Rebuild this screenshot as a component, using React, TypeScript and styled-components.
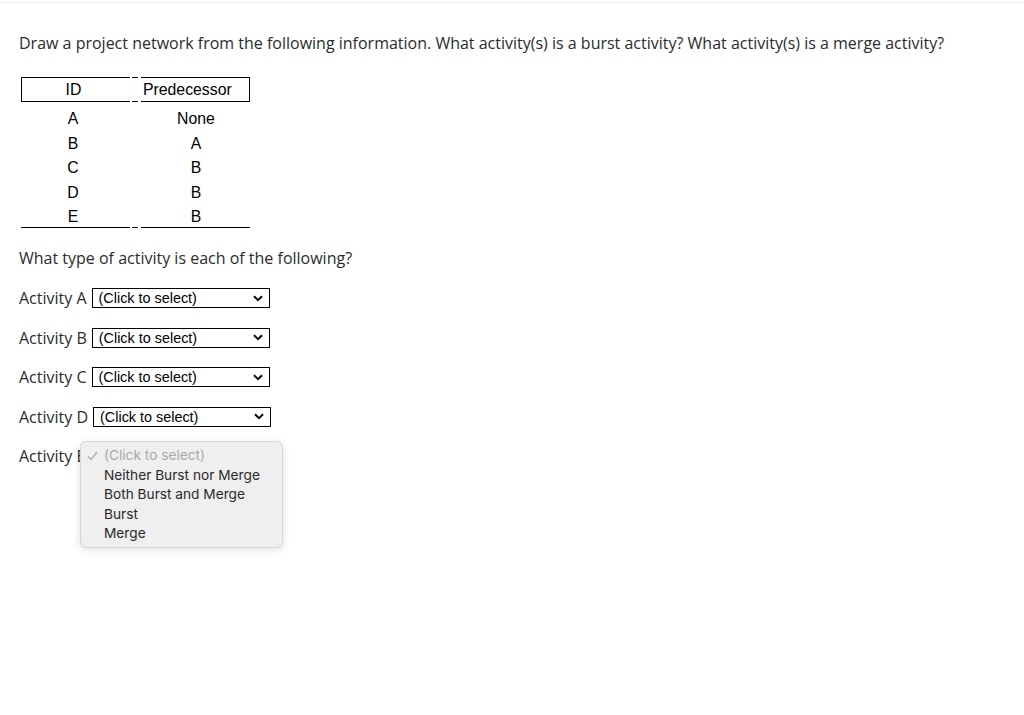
import { FC } from 'react';
import styled, { createGlobalStyle } from 'styled-components';

const Global = createGlobalStyle`
  html, body { margin: 0; padding: 0; background: #fff; }
  body { font-family: "Open Sans", "Liberation Sans", sans-serif; color: #2b2b2b; }
`;

const Page = styled.div`
  min-height: 712px;
  border-top: 1px solid #ececec;
  margin-top: 2px;
  padding: 26px 19px 0 19px;
`;

const Heading = styled.p`
  margin: 0 0 20px 0;
  font-size: 16px;
  line-height: 28px;
`;

const Table = styled.div`
  display: grid;
  grid-template-columns: 109px 11px 109px;
  margin-left: 2px;
  font-family: "Liberation Sans", Arial, sans-serif;
  font-size: 15.8px;
  color: #000;
`;

const HeadCell = styled.div<{ $side: 'left' | 'right' }>`
  height: 23px;
  line-height: 23px;
  border-top: 1px solid #000;
  border-bottom: 1px solid #000;
  ${(p) =>
    p.$side === 'left'
      ? 'border-left: 1px solid #000; text-align: center; padding-right: 5px;'
      : 'border-right: 1px solid #000; text-align: left; padding-left: 2px;'}
`;

const Gap = styled.div<{ $bottomOnly?: boolean }>`
  position: relative;
  &::before, &::after {
    content: '';
    position: absolute;
    left: 2px;
    width: 6px;
    height: 1px;
    background: #000;
  }
  &::before { top: 0; ${(p) => (p.$bottomOnly ? 'display: none;' : '')} }
  &::after { bottom: 0; }
`;

const Cell = styled.div<{ $first?: boolean; $last?: boolean; $left?: boolean }>`
  height: 24.5px;
  line-height: 24.5px;
  text-align: center;
  ${(p) => (p.$left ? 'padding-right: 5px;' : 'padding-left: 1px;')}
  ${(p) => (p.$first ? 'padding-top: 5px;' : '')}
  ${(p) => (p.$last ? 'border-bottom: 1px solid #000; height: 22px; line-height: 24px;' : '')}
`;

const Question = styled.p`
  margin: 17px 0 17px 0;
  font-size: 16px;
  line-height: 26px;
`;

const Rows = styled.div`
  position: relative;
  display: flex;
  flex-direction: column;
  gap: 19.5px;
`;

const Row = styled.div`
  display: flex;
  align-items: center;
  height: 20px;
  font-size: 16px;
`;

const Label = styled.span`
  margin-right: 5px;
`;

const FakeSelect = styled.div`
  box-sizing: border-box;
  width: 178px;
  height: 20px;
  border: 1px solid #000;
  display: flex;
  align-items: center;
  justify-content: space-between;
  padding: 0 6px 0 6px;
  font-family: "Liberation Sans", Arial, sans-serif;
  font-size: 14.4px;
  color: #000;
  background: #fff;
`;

const Menu = styled.div`
  position: absolute;
  left: 61px;
  width: 203px;
  box-sizing: border-box;
  padding: 4px 0 3px 0;
  background: #efefef;
  border: 1px solid #d6d6d6;
  border-radius: 6px;
  box-shadow: 0 2px 8px rgba(0, 0, 0, 0.12);
  font-family: Inter, "Noto Sans", sans-serif;
  font-size: 13.7px;
  color: #2a2a2a;
`;

const MenuItem = styled.div<{ $muted?: boolean }>`
  position: relative;
  height: 19.5px;
  line-height: 19.5px;
  padding-left: 23px;
  color: ${(p) => (p.$muted ? '#a9a9a9' : '#2a2a2a')};
`;

const CheckIcon = styled.svg`
  position: absolute;
  left: 6px;
  top: 5px;
`;

const Chevron: FC = () => (
  <svg width="10" height="7" viewBox="0 0 10 7">
    <path d="M1 1.2 L5 5.2 L9 1.2" fill="none" stroke="#000" strokeWidth="2" />
  </svg>
);

const Check: FC = () => (
  <CheckIcon width="11" height="10" viewBox="0 0 11 10">
    <path d="M1 5.2 L4 8.6 L10 1" fill="none" stroke="#a9a9a9" strokeWidth="1.3" />
  </CheckIcon>
);

const rows = [
  ['A', 'None'],
  ['B', 'A'],
  ['C', 'B'],
  ['D', 'B'],
  ['E', 'B'],
];

const options = ['Neither Burst nor Merge', 'Both Burst and Merge', 'Burst', 'Merge'];

export default function App() {
  return (
    <>
      <Global />
      <Page>
        <Heading>
          Draw a project network from the following information. What activity(s) is a burst activity? What
          activity(s) is a merge activity?
        </Heading>
        <Table>
          <HeadCell $side="left">ID</HeadCell>
          <Gap />
          <HeadCell $side="right">Predecessor</HeadCell>
          {rows.map(([id, pred], i) => {
            const first = i === 0;
            const last = i === rows.length - 1;
            return [
              <Cell key={id + 'a'} $left $first={first} $last={last}>{id}</Cell>,
              last ? <Gap key={id + 'g'} $bottomOnly /> : <div key={id + 'g'} />,
              <Cell key={id + 'b'} $first={first} $last={last}>{pred}</Cell>,
            ];
          })}
        </Table>
        <Question>What type of activity is each of the following?</Question>
        <Rows>
          {['A', 'B', 'C', 'D'].map((a) => (
            <Row key={a}>
              <Label>Activity {a}</Label>
              <FakeSelect>
                <span>(Click to select)</span>
                <Chevron />
              </FakeSelect>
            </Row>
          ))}
          <Row>
            <Label>Activity E</Label>
          </Row>
          <Menu style={{ top: 'calc(4 * 39.5px - 5px)' }}>
            <MenuItem $muted>
              <Check />(Click to select)
            </MenuItem>
            {options.map((o) => (
              <MenuItem key={o}>{o}</MenuItem>
            ))}
          </Menu>
        </Rows>
      </Page>
    </>
  );
}
